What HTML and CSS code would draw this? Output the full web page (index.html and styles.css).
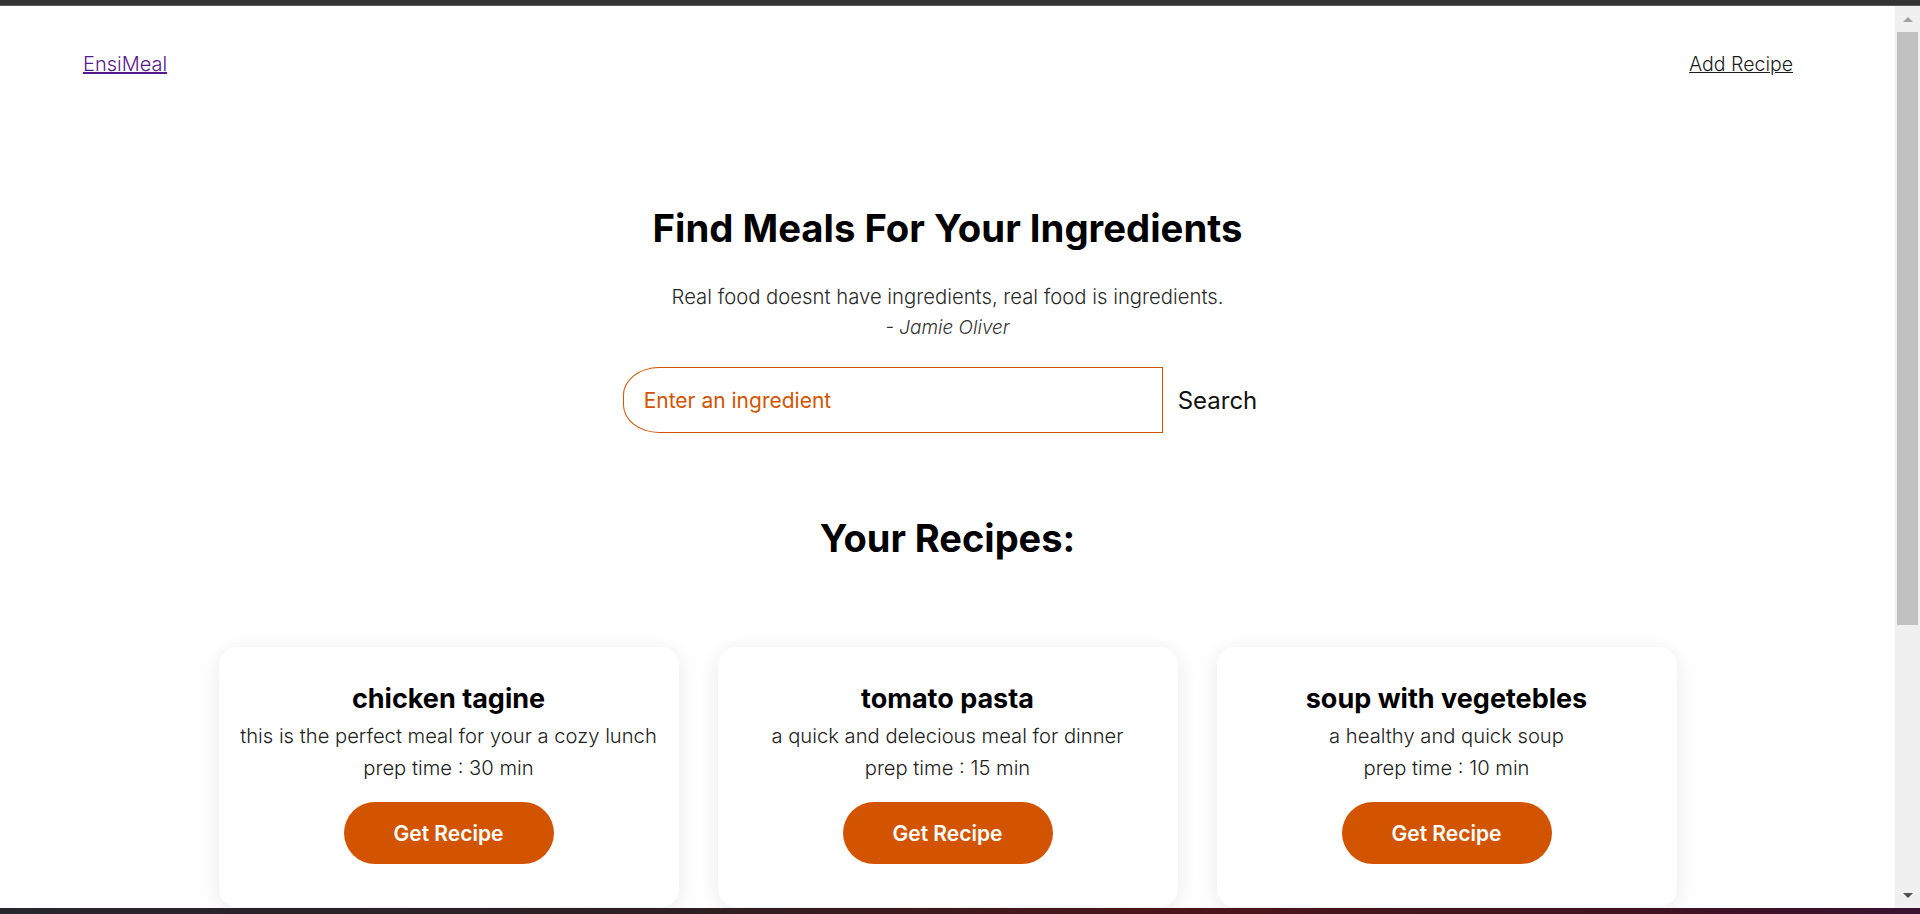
FILE: index.html
```html
<!DOCTYPE html>
<html lang="en">
<head>
<meta charset="utf-8">
<title>EnsiMeal</title>
<link rel="stylesheet" href="styles.css">
</head>
<body>
<div class="topbar"></div>
<div class="window">
  <div class="page">
    <nav class="nav">
      <a class="brand" href="#">EnsiMeal</a>
      <a class="nav-link" href="#">Add Recipe</a>
    </nav>
    <section class="hero">
      <h1 class="title">Find Meals For Your Ingredients</h1>
      <p class="quote">Real food doesnt have ingredients, real food is ingredients.</p>
      <p class="author">- Jamie Oliver</p>
      <form class="search">
        <input class="search-input" type="text" placeholder="Enter an ingredient">
        <button class="search-btn" type="button">Search</button>
      </form>
    </section>
    <h2 class="recipes-title">Your Recipes:</h2>
    <div class="cards">
      <div class="card">
        <h3 class="card-title">chicken tagine</h3>
        <p class="card-text">this is the perfect meal for your a cozy lunch</p>
        <p class="card-text">prep time : 30 min</p>
        <button class="card-btn" type="button">Get Recipe</button>
      </div>
      <div class="card">
        <h3 class="card-title">tomato pasta</h3>
        <p class="card-text">a quick and delecious meal for dinner</p>
        <p class="card-text">prep time : 15 min</p>
        <button class="card-btn" type="button">Get Recipe</button>
      </div>
      <div class="card">
        <h3 class="card-title">soup with vegetebles</h3>
        <p class="card-text">a healthy and quick soup</p>
        <p class="card-text">prep time : 10 min</p>
        <button class="card-btn" type="button">Get Recipe</button>
      </div>
    </div>
  </div>
  <div class="scrollbar">
    <div class="sb-arrow sb-up"></div>
    <div class="sb-thumb"></div>
    <div class="sb-rest"></div>
    <div class="sb-arrow sb-down"></div>
  </div>
</div>
<div class="taskbar"></div>
</body>
</html>
```
FILE: styles.css
```css
* { box-sizing: border-box; }
html, body { margin: 0; padding: 0; }
body {
  width: 1920px;
  height: 914px;
  overflow: hidden;
  display: flex;
  flex-direction: column;
  font-family: "Inter", "Noto Sans", sans-serif;
  background: #ffffff;
  color: #222;
}
.topbar {
  height: 6px;
  flex: none;
  background: #343434;
  border-bottom: 1px solid #5a5a5a;
}
.window {
  flex: 1;
  display: flex;
  min-height: 0;
}
.page {
  flex: 1;
  overflow: hidden;
  background: #fff;
}
.nav {
  display: flex;
  justify-content: space-between;
  padding: 46px 102px 0 83px;
  font-size: 20px;
  line-height: 24px;
  font-weight: 300;
}
.brand { color: #551a8b; text-decoration: underline; }
.nav-link { color: #1c1c1c; text-decoration: underline; font-size: 19.5px; }

.hero {
  display: flex;
  flex-direction: column;
  align-items: center;
}
.title {
  margin: 128px 0 0;
  font-size: 38.3px;
  line-height: 48px;
  font-weight: 700;
  color: #000;
}
.quote, .author {
  margin: 0;
  font-size: 20.3px;
  line-height: 31px;
  font-weight: 300;
  color: #2a2a2a;
}
.quote { margin-top: 29px; }
.author { font-style: italic; color: #333; font-size: 19px; }

.search {
  display: flex;
  margin: 24px 0 0;
  padding-left: 0;
}
.search-input {
  width: 540px;
  height: 66px;
  border: 1px solid #d35400;
  border-radius: 36px 0 0 36px / 28px 0 0 28px;
  padding: 0 20px;
  font-family: inherit;
  font-size: 21px;
  font-weight: 400;
  color: #d35400;
  outline: none;
  background: #fff;
}
.search-input::placeholder { color: #d35400; opacity: 1; }
.search-btn {
  background: none;
  border: none;
  padding: 0 15px;
  font-family: inherit;
  font-size: 24px;
  font-weight: 400;
  color: #111;
}

.recipes-title {
  margin: 81px 0 0;
  text-align: center;
  font-size: 38px;
  line-height: 48px;
  font-weight: 700;
  color: #000;
}
.cards {
  display: grid;
  grid-template-columns: repeat(3, 460px);
  gap: 39px;
  justify-content: center;
  margin-top: 85px;
}
.card {
  background: #fff;
  border-radius: 18px;
  box-shadow: 0 4px 22px rgba(0, 0, 0, 0.09);
  padding: 37px 16px 43px;
  display: flex;
  flex-direction: column;
  align-items: center;
  text-align: center;
}
.card-title {
  margin: 0 0 7px;
  font-size: 27px;
  line-height: 29px;
  font-weight: 700;
  color: #000;
}
.card-text {
  margin: 0;
  font-size: 20.2px;
  line-height: 32px;
  font-weight: 300;
  color: #222;
}
.card-btn {
  margin-top: 18px;
  height: 62px;
  width: 210px;
  border: none;
  border-radius: 31px;
  background: #d35400;
  color: #fff;
  font-family: inherit;
  font-size: 21px;
  font-weight: 600;
}

.scrollbar {
  width: 25px;
  flex: none;
  background: #f0f0f0;
  display: flex;
  flex-direction: column;
  align-items: center;
  padding: 0 2px 0 2px;
}
.sb-arrow {
  flex: none;
  height: 26px;
  width: 100%;
  display: flex;
  align-items: center;
  justify-content: center;
}
.sb-up::before {
  content: "";
  border-left: 5px solid transparent;
  border-right: 5px solid transparent;
  border-bottom: 5px solid #a3a3a3;
}
.sb-down::before {
  content: "";
  border-left: 5px solid transparent;
  border-right: 5px solid transparent;
  border-top: 5px solid #505050;
}
.sb-thumb {
  flex: none;
  width: 21px;
  height: 593px;
  background: #c1c1c1;
}
.sb-rest { flex: 1; }
.taskbar {
  height: 6px;
  flex: none;
  background: linear-gradient(90deg, #27272c 0%, #2e1f24 35%, #4a1619 60%, #3f1320 85%, #3a1230 100%);
}
```
